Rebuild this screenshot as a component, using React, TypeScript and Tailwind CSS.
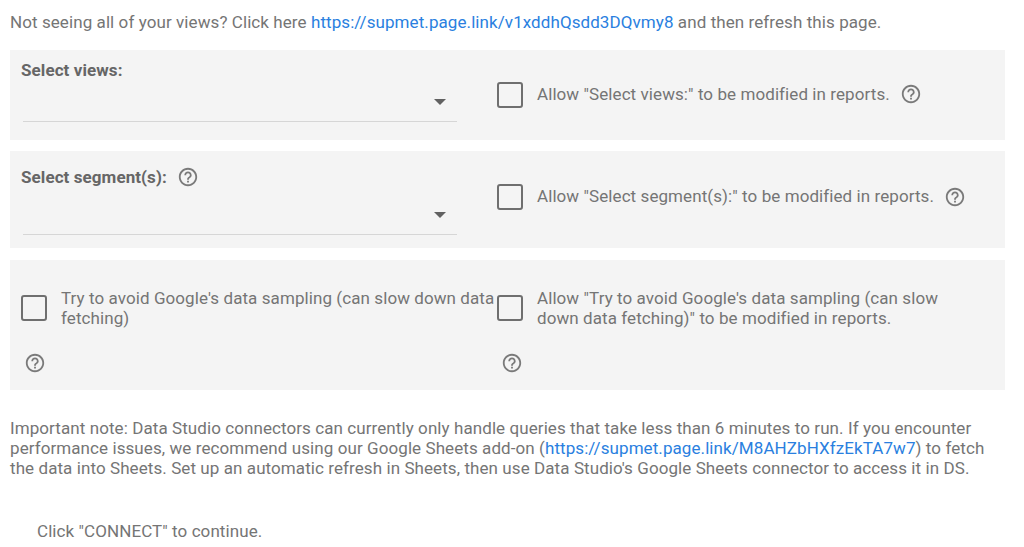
import React from "react";

function HelpIcon({ className = "" }: { className?: string }) {
  return (
    <svg viewBox="0 0 24 24" className={`w-[22px] h-[22px] fill-[#7a7a7a] shrink-0 ${className}`}>
      <path d="M11 18h2v-2h-2v2zm1-16C6.48 2 2 6.48 2 12s4.48 10 10 10 10-4.48 10-10S17.52 2 12 2zm0 18c-4.41 0-8-3.59-8-8s3.59-8 8-8 8 3.59 8 8-3.59 8-8 8zm0-14c-2.21 0-4 1.79-4 4h2c0-1.1.9-2 2-2s2 .9 2 2c0 2-3 1.75-3 5h2c0-2.25 3-2.5 3-5 0-2.21-1.79-4-4-4z" />
    </svg>
  );
}

function Checkbox() {
  return <div className="w-[26px] h-[26px] shrink-0 rounded-[3px] border-2 border-[#6f6f6f]" />;
}

function Dropdown({ tall }: { tall?: boolean }) {
  return (
    <div className={`relative ml-[2px] w-[434px] border-b border-[#d6d6d6] ${tall ? "h-[46px]" : "h-[42px]"}`}>
      {/* arrow */}
      <div
        className={`absolute right-[11px] w-0 h-0 border-l-[6px] border-r-[6px] border-t-[6px] border-l-transparent border-r-transparent border-t-[#616161] ${
          tall ? "top-[23px]" : "top-[19px]"
        }`}
      />
    </div>
  );
}

export default function App() {
  return (
    <div className="min-h-screen bg-white px-[10px] font-['Roboto',sans-serif] text-[17px] leading-[20px] tracking-[0.08px] text-[#757575]">
      <p className="pt-[12px]">
        Not seeing all of your views? Click here{" "}
        <a className="text-[#2a7fe0]">https://supmet.page.link/v1xddhQsdd3DQvmy8</a> and then refresh this page.
      </p>

      {/* views */}
      <div className="mt-[18px] w-[995px] h-[90px] bg-[#f4f4f4] grid grid-cols-[487px_1fr]">
        <div className="pl-[11px] pt-[10px]">
          <div className="font-bold text-[#666]">Select views:</div>
          <Dropdown />
        </div>
        <div className="flex items-center gap-[14px]">
          <Checkbox />
          <span className="pb-[3px]">Allow "Select views:" to be modified in reports.</span>
          <HelpIcon className="-ml-[4px] mb-[2px]" />
        </div>
      </div>

      {/* segments */}
      <div className="mt-[11px] w-[995px] h-[97px] bg-[#f4f4f4] grid grid-cols-[487px_1fr]">
        <div className="pl-[11px] pt-[14px]">
          <div className="flex items-center gap-[10px] h-[24px]">
            <span className="font-bold text-[#666]">Select segment(s):</span>
            <HelpIcon />
          </div>
          <Dropdown tall />
        </div>
        <div className="flex items-center gap-[14px] pb-[6px]">
          <Checkbox />
          <span className="pb-[2px]">Allow "Select segment(s):" to be modified in reports.</span>
          <HelpIcon className="-ml-[4px]" />
        </div>
      </div>

      {/* sampling */}
      <div className="mt-[12px] w-[995px] h-[130px] bg-[#f4f4f4] grid grid-cols-[487px_1fr]">
        <div className="pl-[11px] pt-[28px]">
          <div className="flex items-center gap-[14px]">
            <Checkbox />
            <span>Try to avoid Google's data sampling (can slow down data fetching)</span>
          </div>
          <HelpIcon className="mt-[24px] ml-[3px]" />
        </div>
        <div className="pt-[28px]">
          <div className="flex items-center gap-[14px]">
            <Checkbox />
            <span className="max-w-[420px]">
              Allow "Try to avoid Google's data sampling (can slow down data fetching)" to be modified in reports.
            </span>
          </div>
          <HelpIcon className="mt-[24px] ml-[4px]" />
        </div>
      </div>

      <p className="mt-[28px] w-[995px]">
        Important note: Data Studio connectors can currently only handle queries that take less than 6 minutes to run. If you encounter
        performance issues, we recommend using our Google Sheets add-on (
        <a className="text-[#2a7fe0]">https://supmet.page.link/M8AHZbHXfzEkTA7w7</a>) to fetch the data into Sheets. Set up an
        automatic refresh in Sheets, then use Data Studio's Google Sheets connector to access it in DS.
      </p>

      <p className="mt-[43px] pl-[27px]">Click "CONNECT" to continue.</p>
    </div>
  );
}
